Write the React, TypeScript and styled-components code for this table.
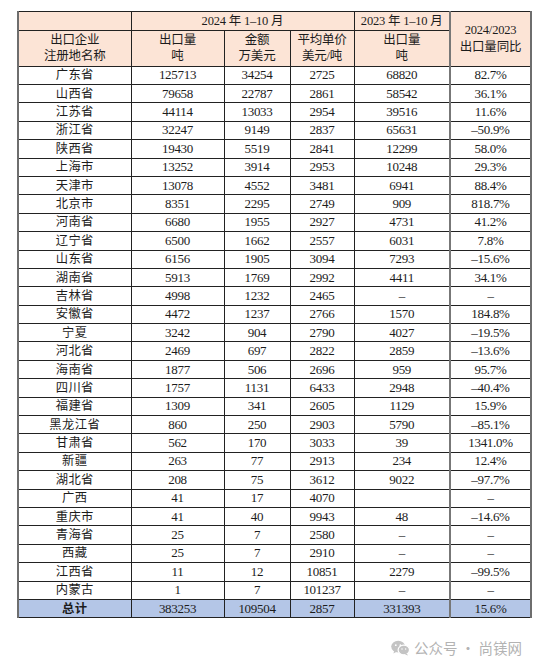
import React from 'react'
import styled, { createGlobalStyle } from 'styled-components'

const GlobalStyle = createGlobalStyle`
  body {
    margin: 0;
    background: #ffffff;
  }
`

type Row = [string, string, string, string, string, string]

const rows: Row[] = [
  ['广东省', '125713', '34254', '2725', '68820', '82.7%'],
  ['山西省', '79658', '22787', '2861', '58542', '36.1%'],
  ['江苏省', '44114', '13033', '2954', '39516', '11.6%'],
  ['浙江省', '32247', '9149', '2837', '65631', '-50.9%'],
  ['陕西省', '19430', '5519', '2841', '12299', '58.0%'],
  ['上海市', '13252', '3914', '2953', '10248', '29.3%'],
  ['天津市', '13078', '4552', '3481', '6941', '88.4%'],
  ['北京市', '8351', '2295', '2749', '909', '818.7%'],
  ['河南省', '6680', '1955', '2927', '4731', '41.2%'],
  ['辽宁省', '6500', '1662', '2557', '6031', '7.8%'],
  ['山东省', '6156', '1905', '3094', '7293', '-15.6%'],
  ['湖南省', '5913', '1769', '2992', '4411', '34.1%'],
  ['吉林省', '4998', '1232', '2465', '-', '-'],
  ['安徽省', '4472', '1237', '2766', '1570', '184.8%'],
  ['宁夏', '3242', '904', '2790', '4027', '-19.5%'],
  ['河北省', '2469', '697', '2822', '2859', '-13.6%'],
  ['海南省', '1877', '506', '2696', '959', '95.7%'],
  ['四川省', '1757', '1131', '6433', '2948', '-40.4%'],
  ['福建省', '1309', '341', '2605', '1129', '15.9%'],
  ['黑龙江省', '860', '250', '2903', '5790', '-85.1%'],
  ['甘肃省', '562', '170', '3033', '39', '1341.0%'],
  ['新疆', '263', '77', '2913', '234', '12.4%'],
  ['湖北省', '208', '75', '3612', '9022', '-97.7%'],
  ['广西', '41', '17', '4070', '', '-'],
  ['重庆市', '41', '40', '9943', '48', '-14.6%'],
  ['青海省', '25', '7', '2580', '-', '-'],
  ['西藏', '25', '7', '2910', '-', '-'],
  ['江西省', '11', '12', '10851', '2279', '-99.5%'],
  ['内蒙古', '1', '7', '101237', '-', '-'],
]

const total: Row = ['总计', '383253', '109504', '2857', '331393', '15.6%']

// the sheet's font draws its hyphen as a long dash
const dash = (s: string) => s.replace(/-/g, '–')

const Page = styled.div`
  padding: 11px 0 0 17px;
  font-family: "Liberation Serif", "Noto Sans CJK SC", serif;
  color: #1c1c1c;
`

const Sheet = styled.table`
  width: 513px;
  table-layout: fixed;
  border-collapse: collapse;
  border-left: 2px solid #6e6e6e;
  border-right: 2px solid #6e6e6e;
`

const HeadRow = styled.tr<{ $h: number }>`
  height: ${p => p.$h}px;
`

const BodyRow = styled.tr<{ $total?: boolean }>`
  height: 18.4px;
  background: ${p => (p.$total ? '#b4c6e7' : '#ffffff')};
`

const Head = styled.th<{ $split?: boolean }>`
  background: #fce4d6;
  border: 1px solid #222;
  border-left: ${p => (p.$split ? '2px solid #777' : '1px solid #222')};
  font-weight: normal;
  font-size: 12.5px;
  line-height: 16.5px;
  text-align: center;
  vertical-align: middle;
  padding: 0;
  letter-spacing: -0.2px;
`

const Cell = styled.td<{ $name?: boolean; $split?: boolean; $bold?: boolean }>`
  border: 1px solid #222;
  border-left: ${p => (p.$split ? '2px solid #777' : '1px solid #222')};
  padding: 0;
  text-align: center;
  vertical-align: middle;
  font-size: ${p => (p.$name ? '12.3px' : '13px')};
  letter-spacing: ${p => (p.$name ? '0.4px' : '-0.3px')};
  font-weight: ${p => (p.$bold ? 'bold' : 'normal')};
  line-height: 16px;
  white-space: nowrap;
`

const Footer = styled.div`
  display: flex;
  justify-content: flex-end;
  align-items: center;
  gap: 4px;
  padding: 21px 19px 0 0;
  color: #b3b3b3;
  font-family: "Noto Sans CJK SC", sans-serif;
  font-size: 14.5px;
  line-height: 18px;
`

const WeChat = () => (
  <svg width="19" height="16" viewBox="0 0 19 16">
    <ellipse cx="7.2" cy="6.6" rx="7" ry="5.8" fill="#c4c4c4" />
    <path d="M3.2 10.8 L2.4 13.4 L5.6 11.8 Z" fill="#c4c4c4" />
    <circle cx="4.8" cy="5.2" r="0.9" fill="#fff" />
    <circle cx="9.4" cy="5.2" r="0.9" fill="#fff" />
    <ellipse cx="12.8" cy="10" rx="5.7" ry="4.8" fill="#c4c4c4" stroke="#fff" strokeWidth="1.2" />
    <path d="M15.8 13.6 L17 15.6 L14 14.4 Z" fill="#c4c4c4" />
    <circle cx="11" cy="8.9" r="0.75" fill="#fff" />
    <circle cx="14.6" cy="8.9" r="0.75" fill="#fff" />
  </svg>
)

const DataRow = ({ row, isTotal }: { row: Row; isTotal?: boolean }) => (
  <BodyRow $total={isTotal}>
    <Cell $name $bold={isTotal}>{row[0]}</Cell>
    <Cell>{row[1]}</Cell>
    <Cell>{row[2]}</Cell>
    <Cell>{row[3]}</Cell>
    <Cell>{dash(row[4])}</Cell>
    <Cell $split>{dash(row[5])}</Cell>
  </BodyRow>
)

export default function App() {
  return (
    <Page>
      <GlobalStyle />
      <Sheet>
        <colgroup>
          <col style={{ width: 113 }} />
          <col style={{ width: 93 }} />
          <col style={{ width: 66 }} />
          <col style={{ width: 64 }} />
          <col style={{ width: 96 }} />
          <col style={{ width: 81 }} />
        </colgroup>
        <thead>
          <HeadRow $h={19.3}>
            <Head />
            <Head colSpan={3}>2024 年 1–10 月</Head>
            <Head>2023 年 1–10 月</Head>
            <Head rowSpan={2} $split>
              2024/2023
              <br />
              出口量同比
            </Head>
          </HeadRow>
          <HeadRow $h={35.3}>
            <Head>
              出口企业
              <br />
              注册地名称
            </Head>
            <Head>
              出口量
              <br />
              吨
            </Head>
            <Head>
              金额
              <br />
              万美元
            </Head>
            <Head>
              平均单价
              <br />
              美元/吨
            </Head>
            <Head>
              出口量
              <br />
              吨
            </Head>
          </HeadRow>
        </thead>
        <tbody>
          {rows.map(r => (
            <DataRow key={r[0]} row={r} />
          ))}
          <DataRow row={total} isTotal />
        </tbody>
      </Sheet>
      <Footer>
        <WeChat />
        <span>公众号 · 尚镁网</span>
      </Footer>
    </Page>
  )
}
